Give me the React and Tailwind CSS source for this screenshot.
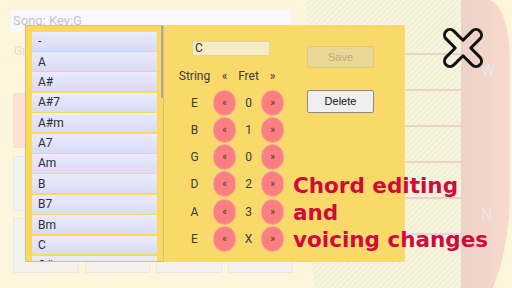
import React from 'react';

const CHORDS = ['-', 'A', 'A#', 'A#7', 'A#m', 'A7', 'Am', 'B', 'B7', 'Bm', 'C', 'C#'];
const VOICING = [
  ['E', '0'],
  ['B', '1'],
  ['G', '0'],
  ['D', '2'],
  ['A', '3'],
  ['E', 'X'],
];

function CloseIcon() {
  // outlined X, drawn as a rotated plus with rounded arm ends
  return (
    <svg width="44" height="44" viewBox="-22 -22 44 44">
      <path
        transform="rotate(45)"
        d="M -5.5 -5.5 V -18.4 A 5.5 5.5 0 0 1 5.5 -18.4 V -5.5 H 18.4 A 5.5 5.5 0 0 1 18.4 5.5 H 5.5 V 18.4 A 5.5 5.5 0 0 1 -5.5 18.4 V 5.5 H -18.4 A 5.5 5.5 0 0 1 -18.4 -5.5 Z"
        fill="none"
        stroke="#111"
        strokeWidth="3"
        strokeLinejoin="round"
      />
    </svg>
  );
}

function Nudge({ glyph }) {
  return (
    <div className="w-[23px] h-[26px] rounded-full bg-[#fb7f80] border border-[#f2aaa2] flex items-center justify-center text-[10px] leading-none text-[#553333]">
      {glyph}
    </div>
  );
}

export default function App() {
  return (
    <div className="relative w-[512px] h-[288px] overflow-hidden bg-[#fdf6dd] flex font-['Roboto',sans-serif]">
      {/* Background: song form */}
      <div className="w-[283px] ml-[10px] pt-[10px] flex flex-col shrink-0">
        <div className="w-[281px] h-[22px] bg-[#f9f8fd] flex items-center pl-[3px] text-[13px] text-[#c6c6c6]">
          Song: Key:G
        </div>
        <div className="mt-[11px] ml-[4px] text-[12px] leading-[16px] text-[#f2d3c3]">Guitar</div>
        <div className="mt-[34px] ml-[3px] w-[280px] h-[55px] bg-[#fbe2d2]" />
        <div className="mt-[8px] ml-[3px] w-[280px] h-[55px] grid grid-cols-4 gap-[6px]">
          {[0, 1, 2, 3].map(i => (
            <div key={i} className="bg-[#f4f2ee] border border-[#ece9e1]" />
          ))}
        </div>
        <div className="mt-[7px] ml-[3px] w-[280px] h-[55px] grid grid-cols-4 gap-[6px]">
          {[0, 1, 2, 3].map(i => (
            <div key={i} className="bg-[#f4f2ee] border border-[#ece9e1]" />
          ))}
        </div>
      </div>

      {/* Background: guitar neck */}
      <div className="ml-[14px] w-[203px] h-[330px] shrink-0 flex overflow-hidden rounded-tr-[22px_60px] rounded-br-[60px_140px] rounded-bl-[30px_140px]">
        <div className="w-[154px] shrink-0 flex flex-col pt-[53px] gap-[34px] bg-[repeating-linear-gradient(135deg,#f8f5df_0px,#f8f5df_2px,#f3efd6_2px,#f3efd6_4px)]">
          <div className="h-[2px] bg-[#ead3c5]" />
          <div className="h-[2px] bg-[#ead3c5]" />
          <div className="h-[2px] bg-[#ead3c5]" />
          <div className="h-[2px] bg-[#ead3c5]" />
          <div className="h-[2px] bg-[#ead3c5]" />
          <div className="h-[2px] bg-[#dcd8ea]" />
        </div>
        <div className="flex-1 flex flex-col pl-[20px] pt-[61px] bg-linear-to-r from-[#ecd2c8] to-[#f9d9cc] text-[16px] leading-[20px] text-[#e9e5f0]">
          <span>W</span>
          <span className="mt-[124px]">N</span>
        </div>
      </div>

      {/* Close button */}
      <div className="absolute left-[441px] top-[26px]">
        <CloseIcon />
      </div>

      {/* Chord editor dialog */}
      <div className="absolute left-[25px] top-[25px] w-[380px] h-[237px] flex bg-[#fad96b]">
        <div className="w-[139px] h-full border border-[#cbc09c] bg-[#fdd95b] flex overflow-hidden shrink-0">
          <div className="ml-[6px] w-[125px] pt-[5.7px] flex flex-col gap-[1.5px] shrink-0">
            {CHORDS.map(c => (
              <div
                key={c}
                className="h-[18.9px] shrink-0 flex items-center pl-[6px] bg-linear-to-b from-[#ebebfd] to-[#dadaf6] text-[12px] text-[#2f2f2f]"
              >
                {c}
              </div>
            ))}
          </div>
          <div className="ml-[3.5px] w-[2.5px] h-[72px] bg-[#b3a98a] shrink-0" />
        </div>

        <div className="flex-1 flex">
          <div className="ml-[12px] pt-[15.7px] flex flex-col">
            <div className="ml-[16px] w-[78px] h-[15.3px] bg-[#f6ebc6] border border-[#e5d59c] flex items-center pl-[2px] text-[12px] text-[#333]">
              C
            </div>
            <div className="mt-[6px] grid grid-cols-[37px_23px_25px_23px] auto-rows-[27.2px] items-center justify-items-center text-[12px] text-[#3a3a3a]">
              <span>String</span>
              <span>«</span>
              <span>Fret</span>
              <span>»</span>
              {VOICING.map(([s, f], i) => (
                <React.Fragment key={i}>
                  <span>{s}</span>
                  <Nudge glyph="«" />
                  <span>{f}</span>
                  <Nudge glyph="»" />
                </React.Fragment>
              ))}
            </div>
          </div>

          <div className="ml-[23px] pt-[21px] flex flex-col font-['Liberation_Sans',sans-serif] text-[11px]">
            <div className="w-[67px] h-[22px] rounded-[2px] bg-[#ead794] border border-[#dcc98a] text-[#b9ab7c] flex items-center justify-center">
              Save
            </div>
            <div className="mt-[22px] w-[67px] h-[23px] rounded-[2px] bg-[#efefef] border border-[#8a8a8a] text-[#111] flex items-center justify-center">
              Delete
            </div>
          </div>
        </div>
      </div>

      {/* Caption */}
      <div className="absolute left-[293px] top-[171.5px] font-['DejaVu_Sans',sans-serif] font-bold text-[21.5px] leading-[27px] text-[#d10a3c] whitespace-nowrap">
        <div>Chord editing</div>
        <div>and</div>
        <div>voicing changes</div>
      </div>
    </div>
  );
}
